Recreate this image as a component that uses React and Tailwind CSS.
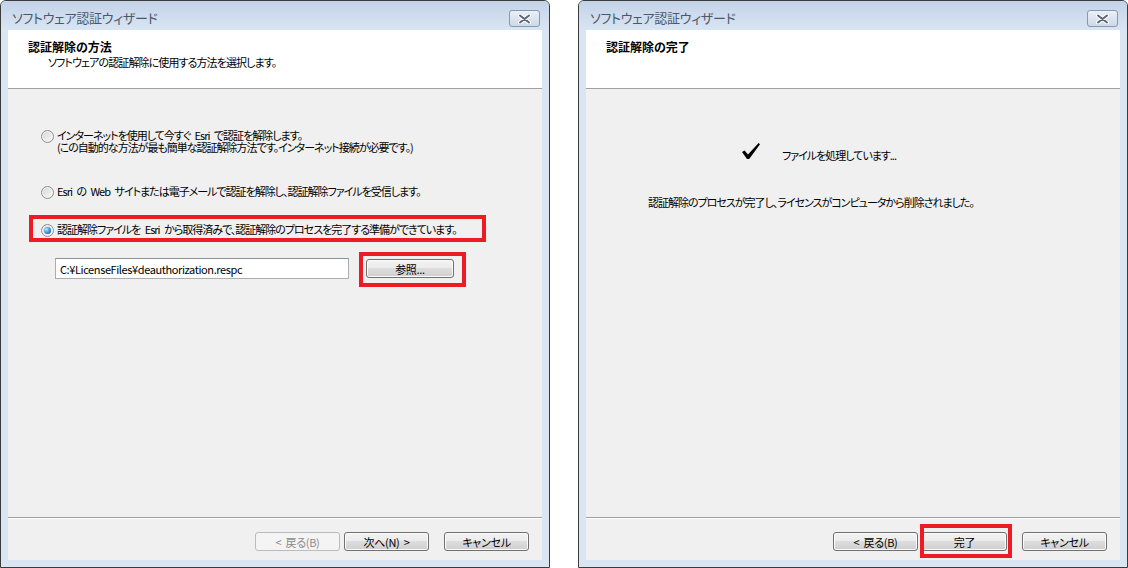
import React from "react";

const font = "font-['Noto_Sans_CJK_JP','Noto_Sans',sans-serif] [font-feature-settings:'palt']";

const Button = ({ children, disabled, className = "" }) => (
  <div
    className={`flex h-[19px] w-[85px] items-center justify-center rounded-[3px] border text-[11px] leading-[12px] tracking-[-0.3px] [word-spacing:2px] ${
      disabled
        ? "border-[#b8bcbf] bg-[#f4f4f4] text-[#8a8a8a]"
        : "border-[#707070] bg-[linear-gradient(#f3f3f3_0%,#ebebeb_50%,#dddddd_50%,#cfcfcf_100%)] text-black shadow-[inset_0_0_0_1px_#fbfbfb]"
    } ${className}`}
  >
    {children}
  </div>
);

const Radio = ({ checked }) => (
  <div className="mt-[1px] flex h-[13px] w-[13px] shrink-0 items-center justify-center rounded-full border border-[#8e8f8f] bg-[linear-gradient(135deg,#d4d4d4,#fbfbfb)] shadow-[inset_0_0_0_1px_#f4f4f4]">
    {checked && (
      <div className="h-[7px] w-[7px] rounded-full bg-[radial-gradient(circle_at_35%_35%,#b4ecff,#2b8fe0_55%,#0b3f8f)]" />
    )}
  </div>
);

const CloseIcon = () => (
  <svg width="13" height="10" viewBox="0 0 13 10">
    <path d="M2 1.5 L11 8.5 M11 1.5 L2 8.5" stroke="#ffffff" strokeWidth="4" strokeLinecap="round" />
    <path d="M2 1.5 L11 8.5 M11 1.5 L2 8.5" stroke="#5b6576" strokeWidth="2" strokeLinecap="round" />
  </svg>
);

const Window = ({ header, body, footer }) => (
  <div className="flex h-[568px] w-[550px] shrink-0 flex-col rounded-t-[6px] border border-[#3b3b3b] bg-[#d9e5f3]">
    <div className="flex h-[29px] shrink-0 items-start justify-between rounded-t-[5px] bg-gradient-to-b from-[#c3d3e8] to-[#d9e5f3] pl-[11px] pr-[9px] pt-[8px]">
      <span className="text-[13px] leading-[17px] tracking-[-0.3px] text-[#4b5869]">ソフトウェア認証ウィザード</span>
      <div className="mt-[1px] flex h-[17px] w-[31px] items-center justify-center rounded-[3px] border border-[#8798b0] bg-gradient-to-b from-[#eaf0f7] to-[#cdd9e8]">
        <CloseIcon />
      </div>
    </div>
    <div className="mx-[7px] flex h-[530px] flex-col bg-[#f0f0f0]">
      <div className="h-[59px] shrink-0 border-b border-[#a0a0a0] bg-white pl-[20px] pt-[10px]">{header}</div>
      <div className="h-[428px] shrink-0">{body}</div>
      <div className="h-[2px] shrink-0 border-t border-[#a0a0a0] bg-white" />
      <div className="flex h-[41px] shrink-0 justify-end pr-[13px] pt-[13px]">{footer}</div>
    </div>
  </div>
);

const RedBox = ({ className }) => (
  <div className={`pointer-events-none absolute border-4 border-[#ed1c24] ${className}`} />
);

export default function App() {
  return (
    <div className={`flex h-[568px] w-[1128px] gap-[28px] overflow-hidden bg-white text-black ${font}`}>
      <Window
        header={
          <>
            <div className="text-[12px] font-bold leading-[14px]">認証解除の方法</div>
            <div className="mt-[1px] pl-[20px] text-[11px] leading-[14px] tracking-[-0.9px]">
              ソフトウェアの認証解除に使用する方法を選択します。
            </div>
          </>
        }
        body={
          <div className="flex flex-col pl-[33px] pt-[40px] text-[11px] leading-[12px] tracking-[-1px] [word-spacing:3px]">
            <div className="flex items-start gap-[3px]">
              <Radio />
              <div className="flex flex-col">
                <span>インターネットを使用して今すぐ Esri で認証を解除します。</span>
                <span>(この自動的な方法が最も簡単な認証解除方法です。インターネット接続が必要です。)</span>
              </div>
            </div>
            <div className="mt-[32px] flex items-start gap-[3px]">
              <Radio />
              <div>Esri の Web サイトまたは電子メールで認証を解除し、認証解除ファイルを受信します。</div>
            </div>
            <div className="relative mt-[24px] flex items-start gap-[3px]">
              <Radio checked />
              <div>認証解除ファイルを Esri から取得済みで、認証解除のプロセスを完了する準備ができています。</div>
              <RedBox className="-left-[12px] -top-[8px] h-[27px] w-[457px]" />
            </div>
            <div className="mt-[21px] flex items-start pl-[14px]">
              <div className="flex h-[21px] w-[294px] items-center border border-[#abadb3] border-t-[#8b8f99] bg-white pl-[4px] text-[11px] tracking-[-0.4px]">
                C:¥LicenseFiles¥deauthorization.respc
              </div>
              <div className="relative ml-[17px] mt-[1px]">
                <Button className="w-[88px]">参照...</Button>
                <RedBox className="-left-[7px] -top-[7px] h-[35px] w-[107px]" />
              </div>
            </div>
          </div>
        }
        footer={
          <>
            <Button disabled>&lt; 戻る(B)</Button>
            <Button className="ml-[4px]">次へ(N) &gt;</Button>
            <Button className="ml-[15px]">キャンセル</Button>
          </>
        }
      />
      <Window
        header={<div className="text-[12px] font-bold leading-[14px]">認証解除の完了</div>}
        body={
          <div className="flex flex-col pt-[54px] text-[11px] leading-[12px] tracking-[-1px]">
            <div className="flex items-start pl-[156px]">
              <svg width="18" height="16" viewBox="0 0 18 16" className="shrink-0">
                <polygon points="0,9 2.6,7.4 6,11.6 16.6,0 18,1.2 7.2,16 5,16" fill="#000000" />
              </svg>
              <div className="ml-[22px] mt-[6px]">ファイルを処理しています...</div>
            </div>
            <div className="mt-[35px] pl-[62px]">
              認証解除のプロセスが完了し、ライセンスがコンピュータから削除されました。
            </div>
          </div>
        }
        footer={
          <>
            <Button>&lt; 戻る(B)</Button>
            <div className="relative ml-[4px]">
              <Button>完了</Button>
              <RedBox className="-left-[2px] -top-[8px] h-[34px] w-[92px]" />
            </div>
            <Button className="ml-[15px]">キャンセル</Button>
          </>
        }
      />
    </div>
  );
}
